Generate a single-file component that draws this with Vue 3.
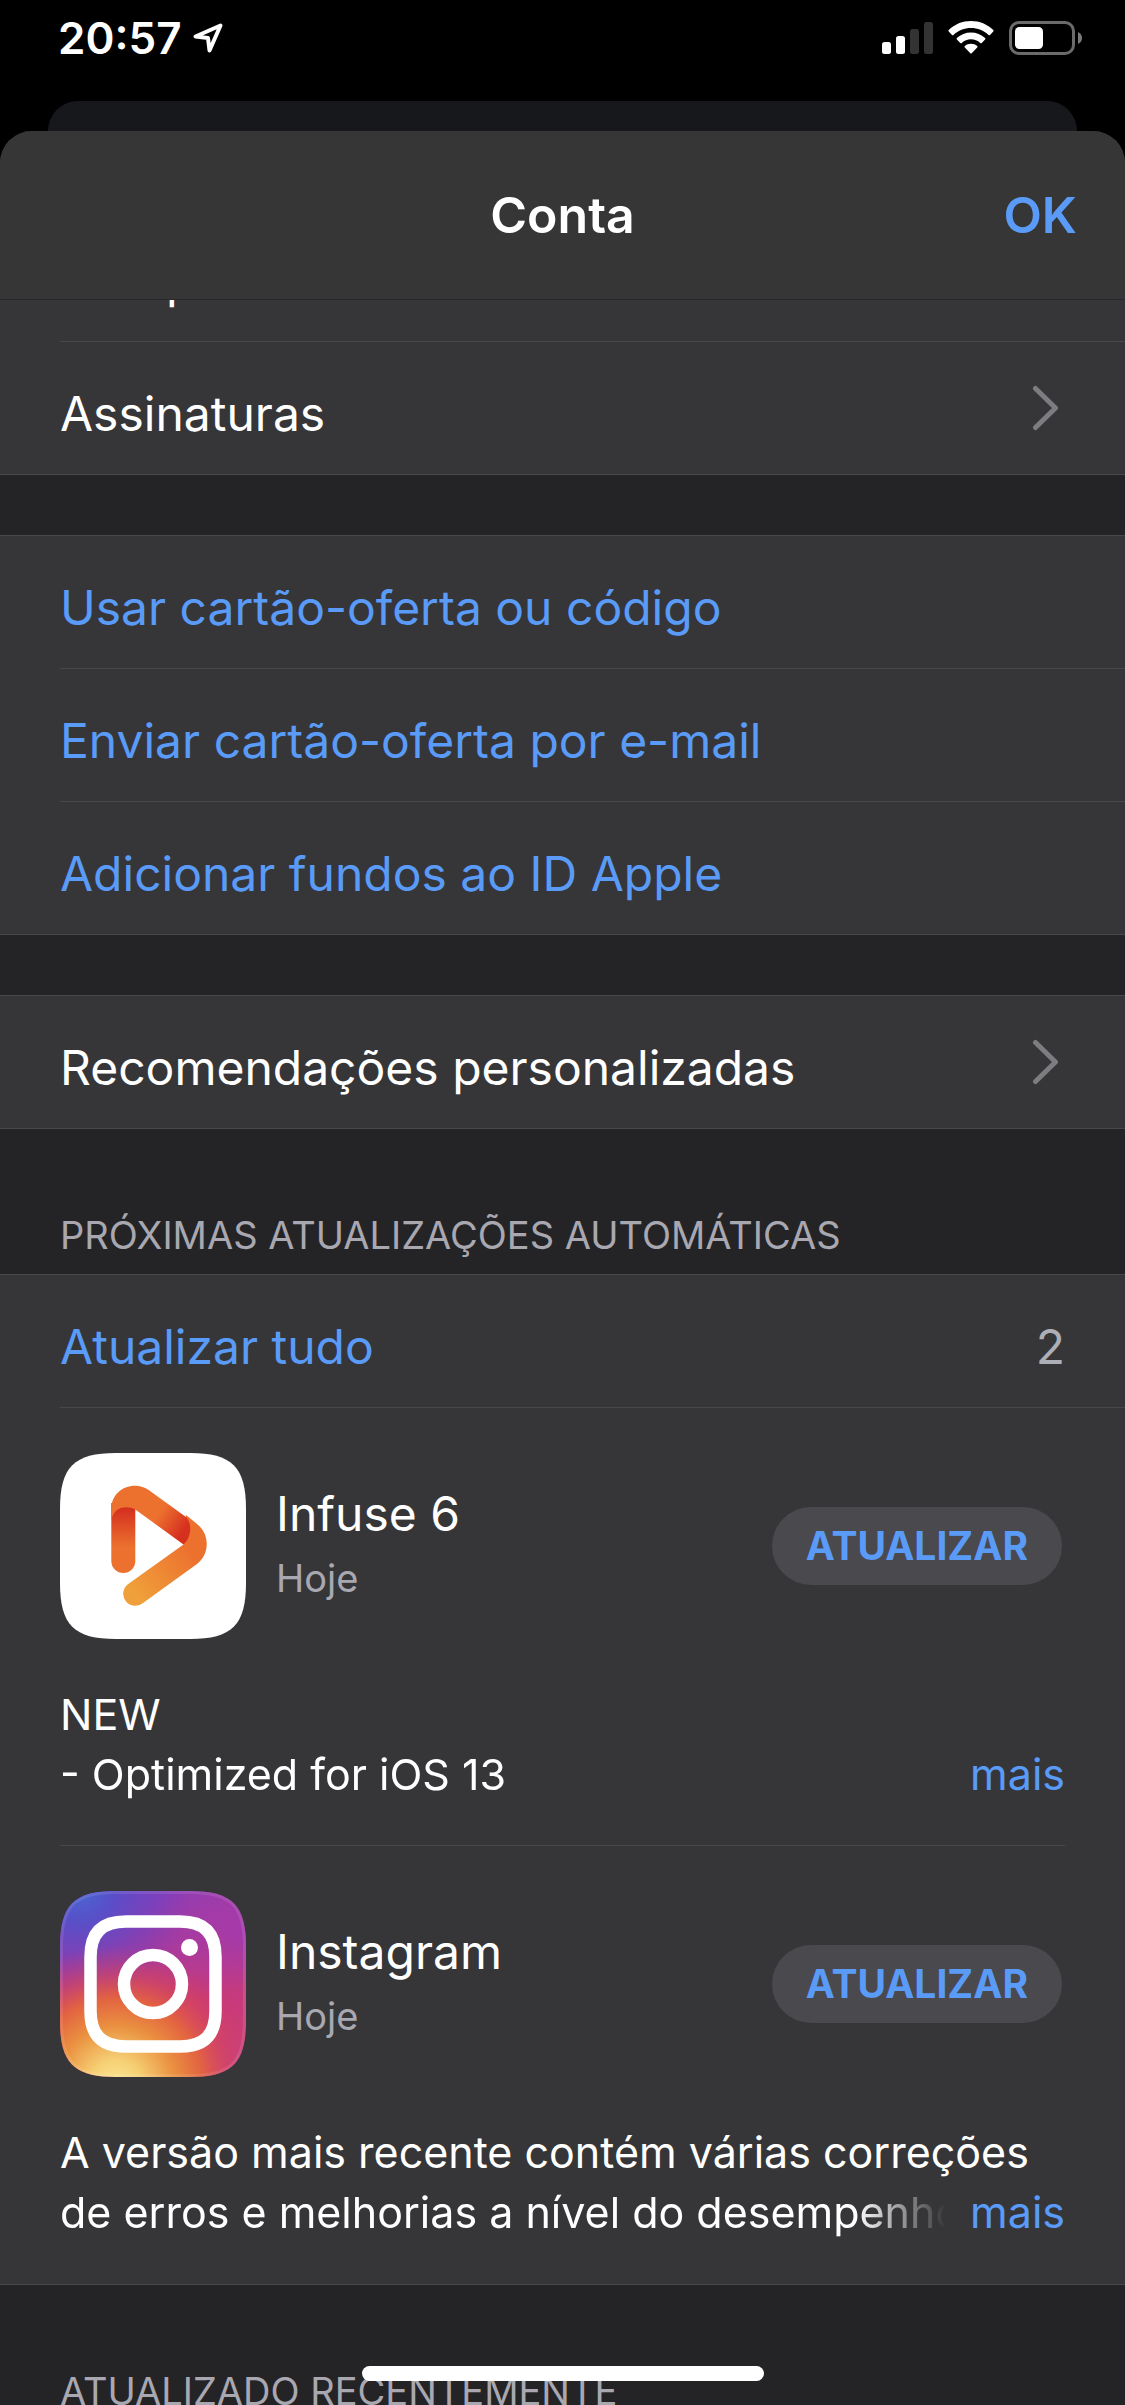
<script setup>
const offers = [
  'Usar cartão-oferta ou código',
  'Enviar cartão-oferta por e-mail',
  'Adicionar fundos ao ID Apple',
]

const updates = [
  { id: 'infuse', name: 'Infuse 6', date: 'Hoje', lines: ['NEW', '- Optimized for iOS 13'] },
  {
    id: 'instagram',
    name: 'Instagram',
    date: 'Hoje',
    lines: ['A versão mais recente contém várias correções', 'de erros e melhorias a nível do desempenho'],
  },
]
</script>

<template>
  <div class="screen">
    <div class="status">
      <div class="status-left">
        <span class="clock">20:57</span>
        <svg class="location" viewBox="0 0 32 32" aria-hidden="true">
          <path d="M28.500 3.500 L3.500 14.500 L16 16 L17.500 28.500 Z" />
        </svg>
      </div>
      <div class="status-right">
        <svg width="51" height="34" viewBox="0 0 51 34" aria-hidden="true">
          <rect x="0" y="21" width="9" height="12" rx="2.500" fill="#fff" />
          <rect x="14" y="15" width="9" height="18" rx="2.500" fill="#fff" />
          <rect x="28" y="8" width="9" height="25" rx="2.500" fill="#333" />
          <rect x="42" y="1" width="9" height="32" rx="2.500" fill="#333" />
        </svg>
        <svg width="46" height="34" viewBox="0 0 46 34" aria-hidden="true">
          <path fill="#fff" d="M23 0 C31.500 0 39.500 3.300 45.300 9 Q46 9.800 45.300 10.600 L42 14 Q41.300 14.600 40.500 13.900 C35.800 9.500 29.600 7 23 7 C16.400 7 10.200 9.500 5.500 13.900 Q4.700 14.600 4 14 L0.700 10.600 Q0 9.800 0.700 9 C6.500 3.300 14.500 0 23 0 Z" />
          <path fill="#fff" d="M23 11.400 C28.400 11.400 33.300 13.400 37.100 16.900 Q37.800 17.700 37.100 18.400 L33.700 21.900 Q33 22.500 32.200 21.900 C29.700 19.600 26.500 18.300 23 18.300 C19.500 18.300 16.300 19.600 13.800 21.900 Q13 22.500 12.300 21.900 L8.900 18.400 Q8.200 17.700 8.900 16.900 C12.700 13.400 17.600 11.400 23 11.400 Z" />
          <path fill="#fff" d="M23 22.800 C25.400 22.800 27.500 23.600 29.200 25 Q30 25.700 29.200 26.400 L23.700 32.200 Q23 32.900 22.300 32.200 L16.800 26.400 Q16 25.700 16.800 25 C18.500 23.600 20.600 22.800 23 22.800 Z" />
        </svg>
        <svg width="74" height="34" viewBox="0 0 74 34" aria-hidden="true">
          <rect x="1.500" y="1.500" width="63" height="31" rx="8.500" fill="none" stroke="#6b6b6b" stroke-width="3" />
          <rect x="6" y="6" width="28" height="22" rx="4.500" fill="#fff" />
          <path d="M69 11 C72 12.500 73 14.500 73 17 C73 19.500 72 21.500 69 23 Z" fill="#7a7a7a" />
        </svg>
      </div>
    </div>

    <div class="back-card"></div>

    <main class="sheet">
      <header class="nav">
        <h1 class="title">Conta</h1>
        <button class="done" type="button">OK</button>
      </header>

      <div class="scrolled-row">
        <a class="row" href="#"><span>Compras</span></a>
      </div>
      <div class="group group-open">
        <a class="row" href="#">
          <span>Assinaturas</span>
          <svg class="chevron" viewBox="0 0 28 46" aria-hidden="true"><path d="M4.500 3.500 L24.500 23 L4.500 42.500" /></svg>
        </a>
      </div>

      <div class="group">
        <button v-for="offer in offers" :key="offer" class="row action" type="button">{{ offer }}</button>
      </div>

      <div class="group">
        <a class="row" href="#">
          <span>Recomendações personalizadas</span>
          <svg class="chevron" viewBox="0 0 28 46" aria-hidden="true"><path d="M4.500 3.500 L24.500 23 L4.500 42.500" /></svg>
        </a>
      </div>

      <h2 class="section">PRÓXIMAS ATUALIZAÇÕES AUTOMÁTICAS</h2>
      <div class="group updates">
        <div class="row row-lined">
          <button class="action" type="button">Atualizar tudo</button>
          <span class="count">2</span>
        </div>

        <article v-for="app in updates" :key="app.id" class="update">
          <div class="app">
            <svg v-if="app.id === 'infuse'" class="icon" viewBox="0 0 186 186" aria-hidden="true">
              <defs>
                <linearGradient id="inf-bar" x1="0" y1="56" x2="0" y2="94" gradientUnits="userSpaceOnUse">
                  <stop offset="0" stop-color="#d5301f" />
                  <stop offset="1" stop-color="#ec702e" />
                </linearGradient>
                <linearGradient id="inf-top" x1="100" y1="60" x2="124" y2="77" gradientUnits="userSpaceOnUse">
                  <stop offset="0" stop-color="#ec702e" />
                  <stop offset="1" stop-color="#d6301f" />
                </linearGradient>
                <linearGradient id="inf-low" x1="132" y1="98" x2="76" y2="142" gradientUnits="userSpaceOnUse">
                  <stop offset="0" stop-color="#ec702e" />
                  <stop offset="1" stop-color="#f0a03a" />
                </linearGradient>
              </defs>
              <path fill="#fff" d="M56 0 H130 C172 0 186 14 186 56 V130 C186 172 172 186 130 186 H56 C14 186 0 172 0 130 V56 C0 14 14 0 56 0 Z" />
              <path fill="url(#inf-bar)" d="M51.300 50 H75.300 V108 A12 12 0 0 1 51.300 108 Z" />
              <path fill="url(#inf-low)" d="M126 62 L137 71 C150 81 150 101 137 111 L83 150 A12 12 0 0 1 67.500 131.500 L123.500 91.500 Z" />
              <path fill="url(#inf-top)" d="M51.300 68 V56 C51.300 42 62 32.700 75 32.700 C80 32.700 85 34.300 89 37.300 L126 64 C132 70 132 84 123.500 91.500 L75.300 56.500 C66 51.500 53 54 51.300 68 Z" />
            </svg>
            <svg v-else class="icon" viewBox="0 0 186 186" aria-hidden="true">
              <defs>
                <linearGradient id="ig-base" x1="60" y1="0" x2="110" y2="186" gradientUnits="userSpaceOnUse">
                  <stop offset="0" stop-color="#7a3fc4" />
                  <stop offset="0.350" stop-color="#a63a9e" />
                  <stop offset="0.650" stop-color="#cf3a6c" />
                  <stop offset="1" stop-color="#c9407c" />
                </linearGradient>
                <radialGradient id="ig-blue" cx="20" cy="0" r="110" gradientUnits="userSpaceOnUse">
                  <stop offset="0" stop-color="#4a66d2" />
                  <stop offset="0.300" stop-color="#5550c8" stop-opacity="0.900" />
                  <stop offset="1" stop-color="#7a3cb8" stop-opacity="0" />
                </radialGradient>
                <radialGradient id="ig-right" cx="186" cy="40" r="100" gradientUnits="userSpaceOnUse">
                  <stop offset="0" stop-color="#a23aae" stop-opacity="0.900" />
                  <stop offset="1" stop-color="#b83a98" stop-opacity="0" />
                </radialGradient>
                <radialGradient id="ig-warm" cx="56" cy="194" r="140" gradientUnits="userSpaceOnUse">
                  <stop offset="0" stop-color="#fbe796" />
                  <stop offset="0.180" stop-color="#f6d074" />
                  <stop offset="0.420" stop-color="#ea9140" />
                  <stop offset="0.620" stop-color="#e4653e" stop-opacity="0.950" />
                  <stop offset="0.800" stop-color="#d84858" stop-opacity="0.500" />
                  <stop offset="1" stop-color="#cc3a70" stop-opacity="0" />
                </radialGradient>
                <clipPath id="ig-clip">
                  <path d="M56 0 H130 C172 0 186 14 186 56 V130 C186 172 172 186 130 186 H56 C14 186 0 172 0 130 V56 C0 14 14 0 56 0 Z" />
                </clipPath>
              </defs>
              <g clip-path="url(#ig-clip)">
                <rect width="186" height="186" fill="url(#ig-base)" />
                <rect width="186" height="186" fill="url(#ig-right)" />
                <rect width="186" height="186" fill="url(#ig-blue)" />
                <rect width="186" height="186" fill="url(#ig-warm)" />
                <path fill="none" stroke="#fff" stroke-opacity="0.100" stroke-width="6" d="M56 0 H130 C172 0 186 14 186 56 V130 C186 172 172 186 130 186 H56 C14 186 0 172 0 130 V56 C0 14 14 0 56 0 Z" />
              </g>
              <path fill="none" stroke="#fff" stroke-width="12.500" d="M66 30.500 H120 C144 30.500 155.500 42 155.500 66 V120 C155.500 144 144 155.500 120 155.500 H66 C42 155.500 30.500 144 30.500 120 V66 C30.500 42 42 30.500 66 30.500 Z" />
              <circle cx="93" cy="93" r="29" fill="none" stroke="#fff" stroke-width="12.500" />
              <circle cx="129.500" cy="56.500" r="8.500" fill="#fff" />
            </svg>
            <div class="meta">
              <h3 class="name">{{ app.name }}</h3>
              <p class="date">{{ app.date }}</p>
            </div>
            <button class="pill" type="button">ATUALIZAR</button>
          </div>
          <div class="notes">
            <p>{{ app.lines[0] }}</p>
            <div class="notes-last">
              <p class="fade">{{ app.lines[1] }}</p>
              <a class="more" href="#">mais</a>
            </div>
          </div>
        </article>
      </div>

      <h2 class="section">ATUALIZADO RECENTEMENTE</h2>
    </main>

    <div class="home"></div>
  </div>
</template>

<style>
body {
  background: #000;
}
</style>

<style scoped>
.screen {
  --line: #48484b;
  --panel: #363638;
  --blue: #5a9bf8;
  position: relative;
  display: flex;
  flex-direction: column;
  height: 100vh;
  overflow: hidden;
  background: #000;
  color: #fff;
  font-family: Inter, "Liberation Sans", sans-serif;
  font-size: 48px;
  line-height: 60px;
}

h1, h2, h3, p {
  margin: 0;
  font: inherit;
}

a {
  color: inherit;
  text-decoration: none;
}

button {
  padding: 0;
  border: 0;
  background: none;
  color: inherit;
  font: inherit;
  text-align: left;
}

svg {
  display: block;
  flex: none;
}

.status {
  display: flex;
  flex: none;
  justify-content: space-between;
  height: 101px;
  box-sizing: border-box;
  padding: 8px 42px 0 58px;
}

.status-left {
  display: flex;
  align-items: flex-start;
  gap: 10px;
}

.clock {
  font-size: 44px;
  font-weight: 600;
}

.location {
  width: 32px;
  height: 32px;
  margin-top: 14px;
  fill: none;
  stroke: #fff;
  stroke-width: 4;
  stroke-linejoin: round;
}

.status-right {
  display: flex;
  gap: 15px;
  padding-top: 13px;
}

.back-card {
  flex: none;
  height: 30px;
  margin: 0 48px;
  border-radius: 30px 30px 0 0;
  background: #17181c;
}

.sheet {
  flex: 1;
  min-height: 0;
  overflow: hidden;
  border-radius: 32px 32px 0 0;
  background: #242426;
}

.nav {
  display: grid;
  grid-template-columns: 1fr auto 1fr;
  align-items: center;
  height: 168px;
  padding: 0 48px;
  border-bottom: 1px solid #29292b;
  background: #363637;
  font-size: 50px;
  font-weight: 600;
}

.title {
  grid-column: 2;
}

.done {
  justify-self: end;
  color: var(--blue);
}

.scrolled-row {
  display: flex;
  align-items: flex-end;
  height: 42px;
  overflow: hidden;
  background: var(--panel);
}

.group {
  margin-top: 60px;
  border-top: 1px solid var(--line);
  border-bottom: 1px solid var(--line);
  background: var(--panel);
}

.group-open {
  margin-top: 0;
  border-top: 0;
}

.row {
  display: flex;
  align-items: center;
  justify-content: space-between;
  width: calc(100% - 60px);
  height: 132px;
  margin-left: 60px;
  padding: 12px 66px 0 0;
  box-sizing: border-box;
}

.scrolled-row .row {
  height: 133px;
  border-bottom: 1px solid var(--line);
}

.row + .row {
  height: 133px;
  border-top: 1px solid var(--line);
}

.row-lined {
  height: 133px;
  padding-right: 60px;
  border-bottom: 1px solid var(--line);
}

.action {
  color: var(--blue);
}

.chevron {
  width: 28px;
  height: 46px;
  margin-bottom: 12px;
  fill: none;
  stroke: #7d7d81;
  stroke-width: 5;
  stroke-linecap: round;
  stroke-linejoin: round;
}

.count {
  color: #aeaeb6;
}

.section {
  height: 145px;
  box-sizing: border-box;
  padding: 83px 60px 0;
  color: #a9a8b1;
  font-size: 38px;
  line-height: 46px;
}

.updates {
  margin-top: 0;
  padding-bottom: 1px;
}

.update {
  margin: 0 60px;
  padding: 45px 0 41px;
}

.update + .update {
  border-top: 1px solid var(--line);
}

.app {
  display: flex;
  align-items: center;
}

.icon {
  width: 186px;
  height: 186px;
}

.meta {
  flex: 1;
  margin-left: 30px;
}

.name {
  margin-bottom: 4px;
}

.date {
  color: #a9a8b1;
  font-size: 38px;
}

.pill {
  height: 78px;
  margin-right: 3px;
  padding: 0 34px;
  border-radius: 39px;
  background: #4a494d;
  color: var(--blue);
  font-size: 39px;
  font-weight: 700;
}

.notes {
  margin-top: 45px;
  font-size: 43px;
}

.notes-last {
  display: flex;
  gap: 24px;
}

.fade {
  flex: 1;
  min-width: 0;
  overflow: hidden;
  white-space: nowrap;
  mask-image: linear-gradient(to left, transparent, #000 90px);
}

.more {
  color: var(--blue);
}

.home {
  position: absolute;
  bottom: 24px;
  left: 50%;
  width: 402px;
  height: 15px;
  margin-left: -201px;
  border-radius: 8px;
  background: #fff;
}
</style>
